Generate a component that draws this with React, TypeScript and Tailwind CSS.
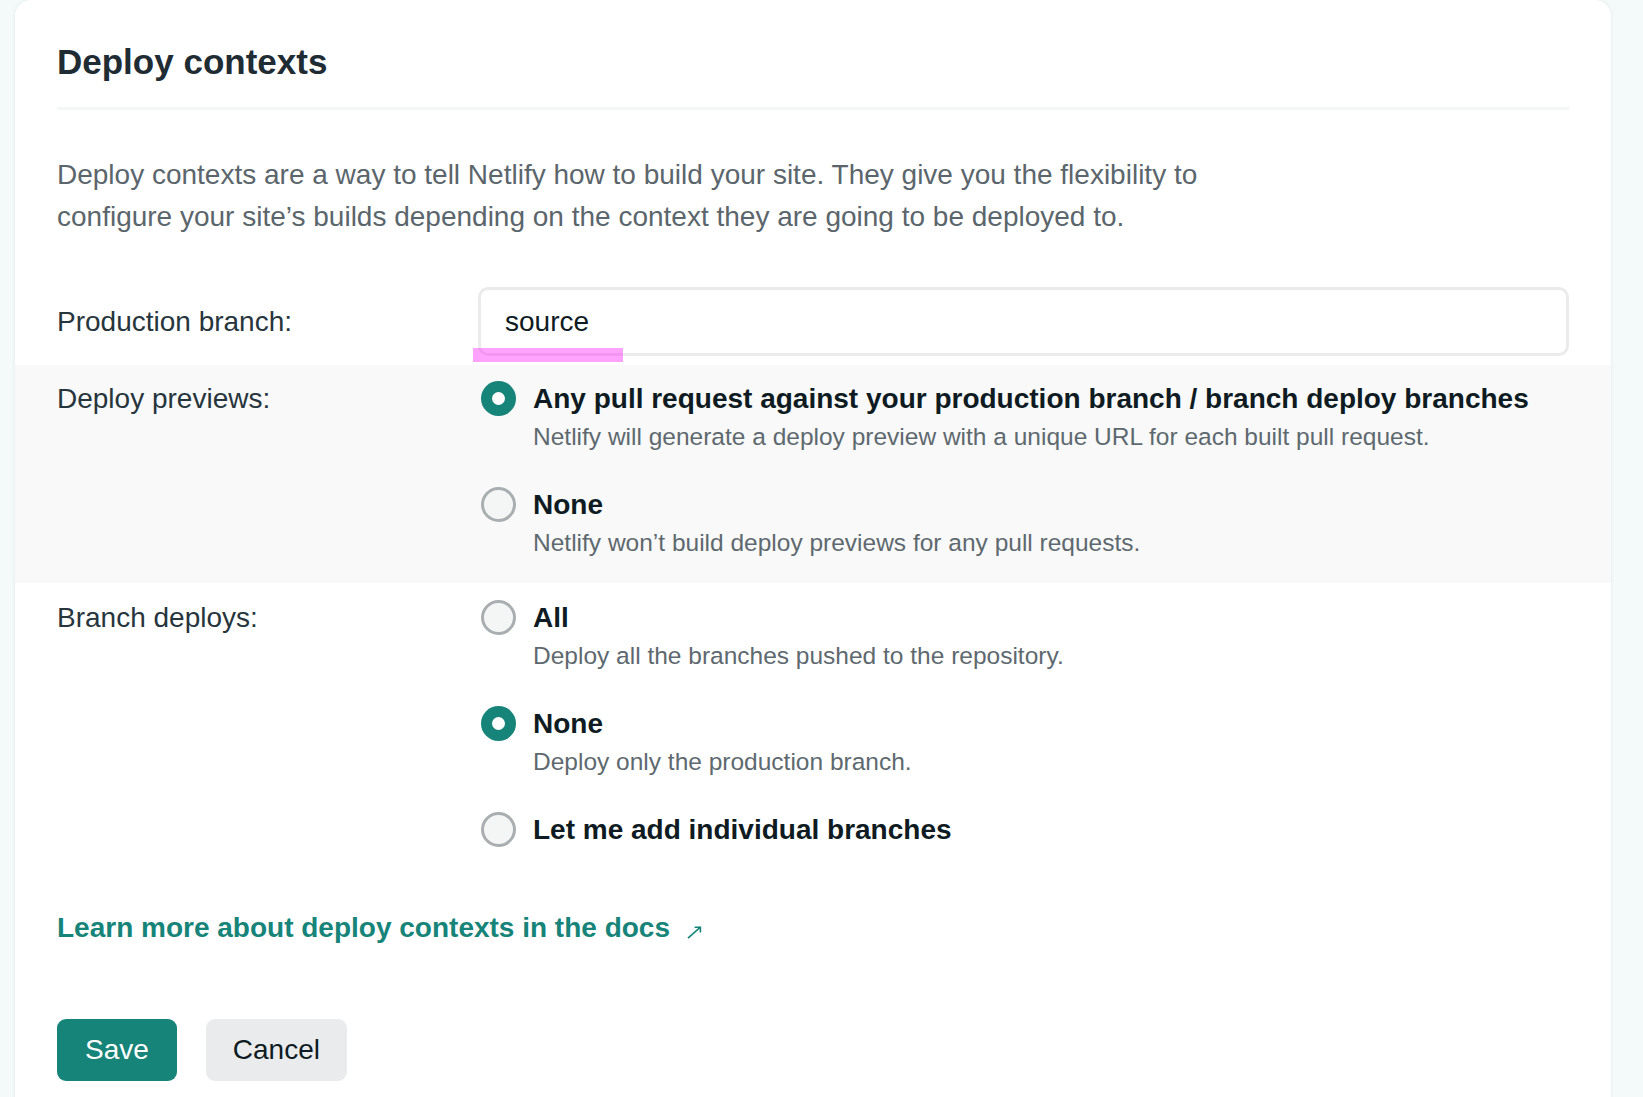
import { useState } from "react";

interface Option {
  id: string;
  title: string;
  desc?: string;
}

const previewOptions: Option[] = [
  {
    id: "any",
    title: "Any pull request against your production branch / branch deploy branches",
    desc: "Netlify will generate a deploy preview with a unique URL for each built pull request.",
  },
  { id: "none", title: "None", desc: "Netlify won’t build deploy previews for any pull requests." },
];

const branchOptions: Option[] = [
  { id: "all", title: "All", desc: "Deploy all the branches pushed to the repository." },
  { id: "none", title: "None", desc: "Deploy only the production branch." },
  { id: "some", title: "Let me add individual branches" },
];

const Radio = ({ checked }: { checked: boolean }) =>
  checked ? (
    <span className="ml-[3px] flex h-[35px] w-[35px] shrink-0 items-center justify-center rounded-full bg-[#168479]">
      <span className="h-[13px] w-[13px] rounded-full bg-white" />
    </span>
  ) : (
    <span className="ml-[3px] h-[35px] w-[35px] shrink-0 rounded-full border-[3.5px] border-[#a9aeb1] bg-[#f4f6f6]" />
  );

const RadioGroup = ({
  options,
  value,
  onChange,
}: {
  options: Option[];
  value: string;
  onChange: (id: string) => void;
}) => (
  <div className="flex flex-col gap-[32px]">
    {options.map((opt) => (
      <button key={opt.id} onClick={() => onChange(opt.id)} className="flex items-start gap-[17px] text-left">
        <Radio checked={value === opt.id} />
        <span className="flex flex-col">
          <span className="text-[28px] font-bold leading-[35px] text-[#0f1b22]">{opt.title}</span>
          {opt.desc && (
            <span className="mt-[2px] text-[24.5px] leading-[37px] text-[#5e696f]">{opt.desc}</span>
          )}
        </span>
      </button>
    ))}
  </div>
);

export default function App() {
  const [preview, setPreview] = useState("any");
  const [branch, setBranch] = useState("none");

  return (
    <div className="min-h-screen bg-[#f4fafa] font-['Liberation_Sans',Arial,sans-serif]">
      <div className="ml-[15px] w-[1596px] rounded-t-[16px] bg-white pb-[40px] shadow-[0_0_4px_rgba(0,0,0,0.07)]">
        <div className="px-[42px] pt-[41px]">
          <h2 className="text-[35px] font-bold leading-[42px] text-[#1f2c33]">Deploy contexts</h2>
          <div className="mt-[24px] h-[3px] bg-[#f4f6f6]" />
          <p className="mt-[44px] max-w-[1190px] text-[28px] leading-[42px] text-[#5b666c]">
            Deploy contexts are a way to tell Netlify how to build your site. They give you the flexibility to
            configure your site’s builds depending on the context they are going to be deployed to.
          </p>

          <div className="mt-[49px] flex items-center">
            <label className="w-[421px] shrink-0 text-[28px] leading-[35px] text-[#27353c]">Production branch:</label>
            <div className="relative flex-1">
              <input
                defaultValue="source"
                className="h-[69px] w-full rounded-[10px] border-[3px] border-[#ebebeb] bg-white pl-[24px] text-[28px] text-[#0f1b22] outline-none"
              />
              <span className="pointer-events-none absolute left-[-5px] top-[61px] h-[14px] w-[150px] bg-[rgba(255,0,255,0.36)]" />
            </div>
          </div>
        </div>

        <div className="mt-[9px] flex bg-[#f9f9f9] px-[42px] pb-[22px] pt-[16px]">
          <div className="w-[421px] shrink-0 text-[28px] leading-[35px] text-[#27353c]">Deploy previews:</div>
          <RadioGroup options={previewOptions} value={preview} onChange={setPreview} />
        </div>

        <div className="flex px-[42px] pt-[17px]">
          <div className="w-[421px] shrink-0 text-[28px] leading-[35px] text-[#27353c]">Branch deploys:</div>
          <RadioGroup options={branchOptions} value={branch} onChange={setBranch} />
        </div>

        <div className="px-[42px]">
          <a href="#" className="mt-[60px] flex items-center gap-[17px] text-[28px] font-bold leading-[42px] text-[#168479]">
            Learn more about deploy contexts in the docs
            <svg width="15" height="13" viewBox="0 0 15 13" fill="none" stroke="#168479" strokeWidth="1.6" className="mt-[8px]">
              <path d="M1 12.2 13.4 1.2" />
              <path d="M7.6 1.2h5.8v5.2" />
            </svg>
          </a>

          <div className="mt-[70px] flex gap-[29px]">
            <button className="h-[62px] rounded-[9px] bg-[#168479] px-[28px] text-[28px] text-white">Save</button>
            <button className="h-[62px] rounded-[9px] bg-[#e9ebec] px-[27px] text-[28px] text-[#0f1b22]">Cancel</button>
          </div>
        </div>
      </div>
    </div>
  );
}
